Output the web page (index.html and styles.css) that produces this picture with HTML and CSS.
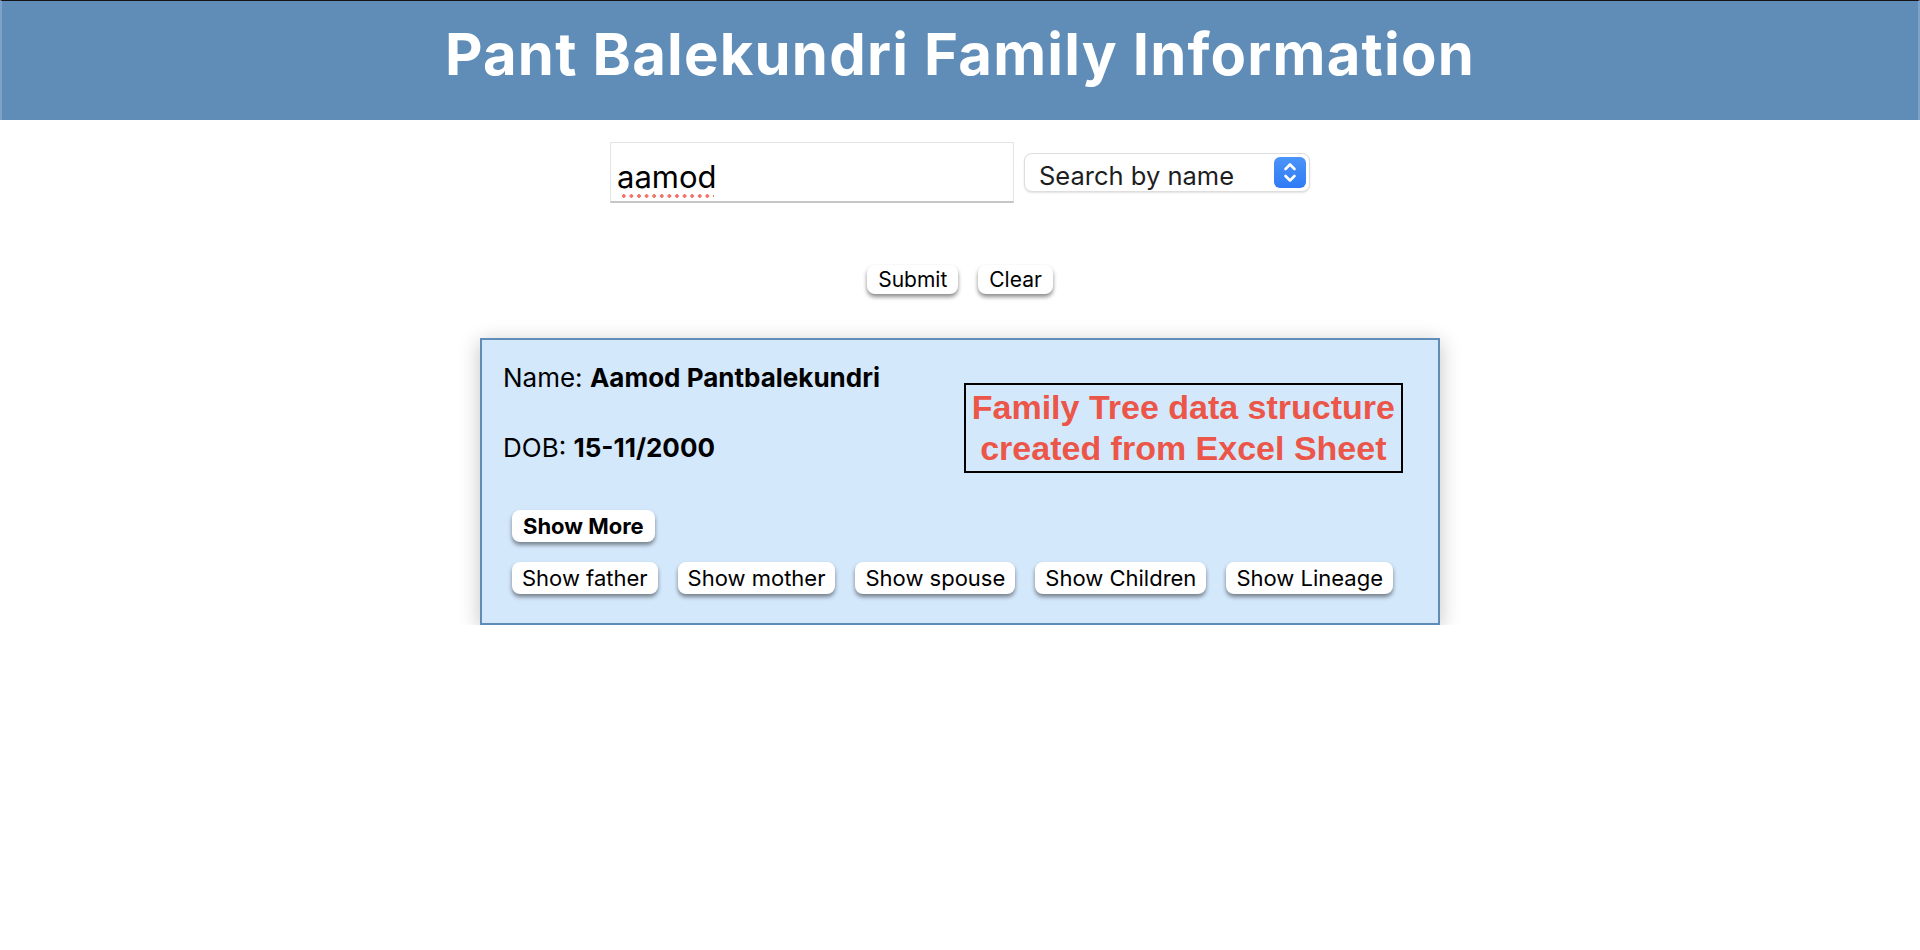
FILE: index.html
```html
<!DOCTYPE html>
<html lang="en">
<head>
<meta charset="utf-8">
<title>Pant Balekundri Family Information</title>
<link rel="stylesheet" href="styles.css">
</head>
<body>
<header class="site-header">
  <h1 class="site-title">Pant Balekundri Family Information</h1>
</header>
<main class="page">
  <form class="search">
    <div class="search-row">
      <div class="search-input"><span class="typed">aamod</span></div>
      <div class="select">
        <span class="select-label">Search by name</span>
        <span class="stepper">
          <svg width="32" height="31" viewBox="0 0 32 31" aria-hidden="true">
            <polyline points="11.5,12 16,7.5 20.5,12" fill="none" stroke="#fff" stroke-width="2.6" stroke-linecap="round" stroke-linejoin="round"/>
            <polyline points="11.5,19 16,23.5 20.5,19" fill="none" stroke="#fff" stroke-width="2.6" stroke-linecap="round" stroke-linejoin="round"/>
          </svg>
        </span>
      </div>
    </div>
    <div class="actions">
      <button type="button" class="btn btn-small">Submit</button>
      <button type="button" class="btn btn-small">Clear</button>
    </div>
  </form>

  <section class="card">
    <div class="card-top">
      <div class="info">
        <p class="info-line">Name: <b>Aamod Pantbalekundri</b></p>
        <p class="info-line">DOB: <b>15-11/2000</b></p>
      </div>
      <div class="note">Family Tree data structure<br>created from Excel Sheet</div>
    </div>
    <div class="btn-row more-row">
      <button type="button" class="btn btn-bold">Show More</button>
    </div>
    <div class="btn-row">
      <button type="button" class="btn">Show father</button>
      <button type="button" class="btn">Show mother</button>
      <button type="button" class="btn">Show spouse</button>
      <button type="button" class="btn">Show Children</button>
      <button type="button" class="btn">Show Lineage</button>
    </div>
  </section>
</main>
</body>
</html>
```
FILE: styles.css
```css
* { box-sizing: border-box; }

body {
  margin: 0;
  background: #ffffff;
  font-family: Inter, "Noto Sans", sans-serif;
  color: #000;
}

.site-header {
  height: 120px;
  background: #5f8db8;
  border-top: 1px solid #151515;
  border-left: 2px solid #7fa3c8;
  border-right: 2px solid #7fa3c8;
  padding-top: 18px;
}

.site-title {
  margin: 0;
  text-align: center;
  color: #ffffff;
  font-size: 58px;
  font-weight: 700;
  letter-spacing: 1.2px;
  line-height: 70px;
}

.page {
  padding-top: 22px;
}

.search-row {
  display: flex;
  justify-content: center;
  align-items: center;
  gap: 10px;
}

.search-input {
  width: 404px;
  height: 61px;
  border: 1px solid #e4e4e4;
  border-bottom: 2px solid #c6c6c6;
  padding: 0 6px;
  display: flex;
  align-items: center;
  font-size: 31px;
  color: #000;
}

.typed {
  position: relative;
  top: 4px;
}

.typed::after {
  content: "";
  position: absolute;
  left: 3px;
  width: 94px;
  bottom: -3px;
  height: 4px;
  background: radial-gradient(circle, #f2766b 1.6px, transparent 2px) 0 0 / 7.6px 4px repeat-x;
}

.select {
  width: 286px;
  height: 39px;
  border: 1px solid #dedede;
  border-radius: 8px;
  background: #ffffff;
  box-shadow: 0 1px 2px rgba(0, 0, 0, 0.12);
  display: flex;
  align-items: center;
  justify-content: space-between;
  padding: 0 3px 0 14px;
  font-size: 25.5px;
  color: #1e1e1e;
}

.select-label {
  position: relative;
  top: 3px;
}

.stepper {
  width: 32px;
  height: 31px;
  border-radius: 6px;
  background: linear-gradient(#4b94f8, #2f7bf5);
  display: flex;
}

.actions {
  display: flex;
  justify-content: center;
  gap: 20px;
  margin-top: 62px;
}

.btn {
  font-family: Inter, "Noto Sans", sans-serif;
  font-size: 22px;
  color: #000;
  background: #ffffff;
  border: none;
  border-radius: 8px;
  height: 32px;
  padding: 0 10px;
  box-shadow: 0 3px 4px rgba(0, 0, 0, 0.45);
  cursor: pointer;
}

.btn-small {
  height: 29px;
  font-size: 21px;
  padding: 0 11px;
}

.btn-bold {
  font-weight: 700;
  padding: 0 11px;
}

.card {
  width: 960px;
  margin: 44px auto 0;
  border: 2px solid #5f8db8;
  background: #d4e8fc;
  box-shadow: 0 4px 20px rgba(0, 0, 0, 0.24);
  padding: 22px 21px 29px 21px;
}

.card-top {
  display: flex;
  justify-content: space-between;
  align-items: flex-start;
}

.info {
  display: flex;
  flex-direction: column;
  gap: 38px;
}

.info-line {
  margin: 0;
  font-size: 26px;
  line-height: 32px;
}

.note {
  margin: 21px 14px 0 0;
  border: 2px solid #000;
  padding: 2px 6px;
  font-family: "Liberation Sans", Arial, sans-serif;
  font-weight: 700;
  font-size: 34px;
  line-height: 41px;
  color: #eb5649;
  text-align: center;
}

.btn-row {
  display: flex;
  gap: 20px;
  padding-left: 9px;
}

.more-row {
  margin-top: 37px;
  margin-bottom: 20px;
}
```
